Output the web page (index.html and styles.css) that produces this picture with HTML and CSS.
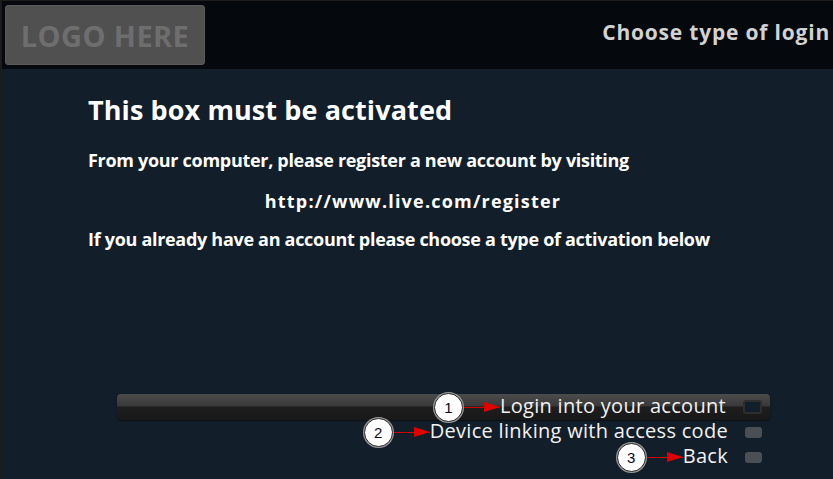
FILE: index.html
```html
<!DOCTYPE html>
<html lang="en">
<head>
    <meta charset="UTF-8">
    <meta name="viewport" content="width=device-width, initial-scale=1.0">
    <title>Choose type of login</title>

    <link rel="stylesheet" href="styles.css">
</head>
<body>
    <div class="screen">
        <div class="header">
            <div class="logo">LOGO HERE</div>
            <div class="header-title">Choose type of login</div>
        </div>

        <div class="content">
            <h1>This box must be activated</h1>
            <p>From your computer, please register a new account by visiting</p>
            <p class="url">http://www.live.com/register</p>
            <p>If you already have an account please choose a type of activation below</p>
        </div>

        <ul class="menu">
            <li class="selected">
                <span class="callout"><span class="num">1</span><span class="arrow"></span></span>
                <span class="label">Login into your account</span>
                <span class="toggle"></span>
            </li>
            <li>
                <span class="callout"><span class="num">2</span><span class="arrow"></span></span>
                <span class="label">Device linking with access code</span>
                <span class="toggle"></span>
            </li>
            <li>
                <span class="callout"><span class="num">3</span><span class="arrow"></span></span>
                <span class="label">Back</span>
                <span class="toggle"></span>
            </li>
        </ul>
    </div>
</body>
</html>
```

FILE: styles.css
```css
body {
    margin: 0;
    padding: 0;
    background-color: #121e2a;
    font-family: 'Open Sans', sans-serif;
    color: #fff;
}

.screen {
    width: 831px;
    height: 478px;
    border-left: 2px solid #1c1c1c;
    border-top: 1px solid #1c1c1c;
    overflow: hidden;
}

.header {
    display: flex;
    justify-content: space-between;
    align-items: flex-start;
    height: 68px;
    background-color: #05080c;
}

.logo {
    margin: 4px 0 0 3px;
    width: 200px;
    height: 60px;
    display: flex;
    align-items: center;
    justify-content: center;
    background-color: #505050;
    border-radius: 3px;
    color: #6e6e6e;
    font-size: 29px;
    font-weight: 700;
    letter-spacing: 0.4px;
    box-sizing: border-box;
    border: 1px solid #5a5a5a;
}

.header-title {
    margin: 17px 3px 0 0;
    color: #d2d2d2;
    font-size: 21px;
    font-weight: 700;
    letter-spacing: 0.8px;
}

.content {
    padding: 23px 0 0 86px;
    height: 300px;
    box-sizing: border-box;
}

h1 {
    margin: 0 0 21px;
    font-size: 27px;
    font-weight: 700;
    letter-spacing: 0.1px;
    line-height: 36px;
}

.content p {
    margin: 0 0 19px;
    font-size: 18px;
    font-weight: 700;
    letter-spacing: -0.3px;
    line-height: 22px;
}

.content p.url {
    text-align: center;
    margin-right: 95px;
    margin-bottom: 16px;
    letter-spacing: 1.2px;
}

.menu {
    list-style-type: none;
    margin: 25px 0 0 115px;
    padding: 0;
    width: 653px;
}

.menu li {
    display: flex;
    justify-content: flex-end;
    align-items: center;
    height: 25px;
    padding-right: 8px;
}

.menu li.selected {
    height: 26px;
    background: linear-gradient(#4b4b4b 0%, #3a3a3a 45%, #1e1e1e 50%, #181818 100%);
    border-radius: 4px;
    box-shadow: 0 1px 2px rgba(0, 0, 0, 0.5);
}

.label {
    margin-top: -4px;
    font-size: 20px;
    letter-spacing: 0.3px;
    color: #f2f2f2;
}

.callout {
    display: flex;
    align-items: center;
}

.num {
    width: 27px;
    height: 27px;
    border-radius: 50%;
    background-color: #fff;
    border: 1px solid #222;
    box-shadow: 0 0 0 1px #999;
    color: #0a0a20;
    font-family: 'Liberation Sans', sans-serif;
    font-size: 15px;
    display: flex;
    align-items: center;
    justify-content: center;
}

.arrow {
    position: relative;
    width: 36px;
    height: 1px;
    margin-left: 1px;
    background-color: #d00000;
}

.arrow::after {
    content: "";
    position: absolute;
    right: 0;
    top: -5px;
    border-left: 16px solid #e00000;
    border-top: 5px solid transparent;
    border-bottom: 5px solid transparent;
}

.toggle {
    width: 17px;
    height: 11px;
    margin-left: 17px;
    border-radius: 3px;
    background-color: #4a4f55;
}

.selected .toggle {
    background-color: #121e2a;
    border: 2px solid #2e2e2e;
    width: 15px;
    height: 10px;
}
```
